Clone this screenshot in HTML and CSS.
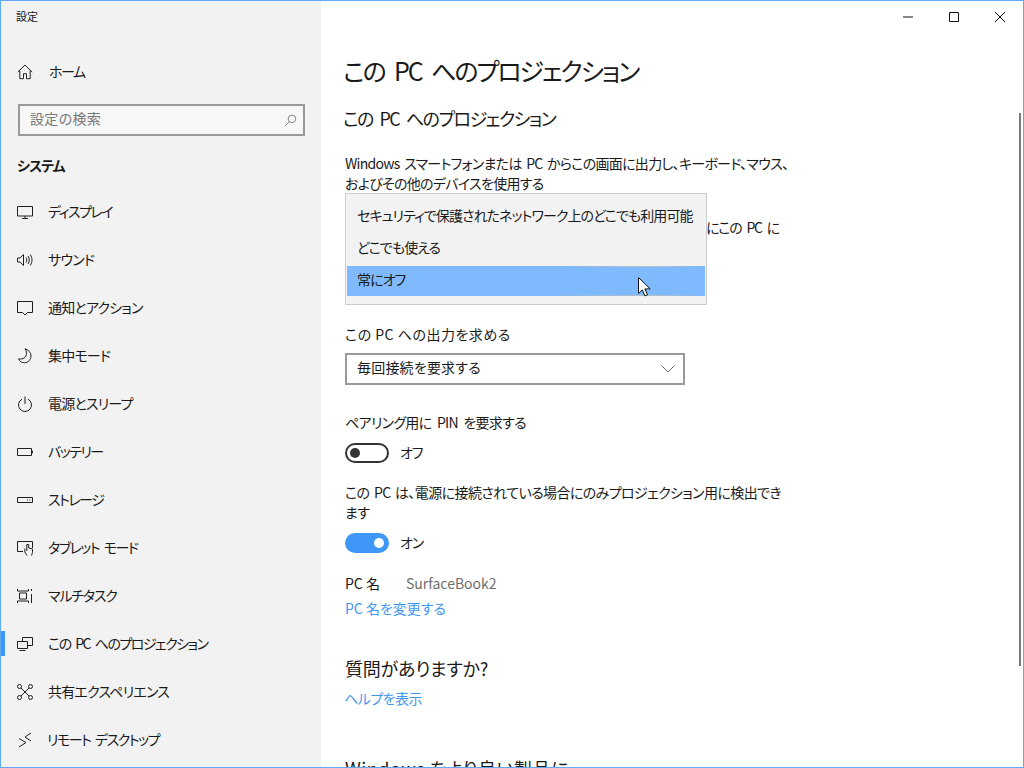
FILE: index.html
```html
<!DOCTYPE html>
<html lang="ja">
<head>
<meta charset="utf-8">
<title>設定</title>
<link rel="stylesheet" href="styles.css">
</head>
<body>
<div class="window">
  <aside class="sidebar">
    <div class="apptitle">設定</div>
    <div class="nav-item home">
      <svg class="icon" viewBox="0 0 16 16"><path d="M.8 8 8 1l7.200 7M2.800 6.500v8.200h3.700v-5h3v5h3.700V6.500"/></svg>
      <span class="tight-c">ホーム</span>
    </div>
    <div class="search">
      <span>設定の検索</span>
      <svg class="search-icon" viewBox="0 0 16 16"><circle cx="9.800" cy="6" r="4.700"/><path d="M6.500 9.500 1 15"/></svg>
    </div>
    <div class="group">システム</div>
    <nav class="nav">
      <div class="nav-item">
        <svg class="icon" viewBox="0 0 16 16"><path d="M.5 2.500h15v9.500H.5zM5 14.500h6M8 12v2.500"/></svg>
        <span class="tight-c">ディスプレイ</span>
      </div>
      <div class="nav-item">
        <svg class="icon" viewBox="0 0 16 16"><path d="M.5 6h2.500L6.500 2.500v11L3 10H.5zM9 5.500c1 1.500 1 3.500 0 5M11 4c1.700 2.500 1.700 5.500 0 8M13.200 2.500c2.400 3.500 2.400 7.500 0 11"/></svg>
        <span class="tight-a">サウンド</span>
      </div>
      <div class="nav-item">
        <svg class="icon" viewBox="0 0 16 16"><path d="M.5 1.500h15v11h-5L8 15l-2.500-2.500h-5z"/></svg>
        <span class="tight-a">通知とアクション</span>
      </div>
      <div class="nav-item">
        <svg class="icon" viewBox="0 0 16 16"><path d="M8 .8c3.800 1.200 6 3.700 6 7.200 0 3.800-3 6.800-6.500 6.800-2.800 0-5-1.500-6-4 4.500 1 8-1.500 8-5.500 0-1.800-.5-3.200-1.500-4.500z"/></svg>
        <span class="tight-a">集中モード</span>
      </div>
      <div class="nav-item">
        <svg class="icon" viewBox="0 0 16 16"><path d="M5 3.200a6.500 6.500 0 1 0 6 0M8 .5v7.500"/></svg>
        <span class="tight-a">電源とスリープ</span>
      </div>
      <div class="nav-item">
        <svg class="icon" viewBox="0 0 16 16"><path d="M.5 4.500h14v7H.5zM14.500 7h1v2h-1"/></svg>
        <span class="tight-c">バッテリー</span>
      </div>
      <div class="nav-item">
        <svg class="icon" viewBox="0 0 16 16"><path d="M.5 5.500h15v5H.5zM10 8h1M12.500 8h1"/></svg>
        <span class="tight-c">ストレージ</span>
      </div>
      <div class="nav-item">
        <svg class="icon" viewBox="0 0 16 16"><path d="M6 11.500H.5v-10h15V8M10 15.500 7.800 12V8.500M9.800 11V4.500h1.900V8l3.800 1v3.500l-1 3"/></svg>
        <span class="tight-c">タブレット モード</span>
      </div>
      <div class="nav-item">
        <svg class="icon" viewBox="0 0 16 16"><path d="M.5 1v2h11V1M2.500 5h7v6h-7zM.5 15v-2h11v2M14.500 1v2M14.500 6v9"/></svg>
        <span class="tight-b">マルチタスク</span>
      </div>
      <div class="nav-item active">
        <svg class="icon" viewBox="0 0 16 16"><path d="M5.500 5V1.500h10v8h-5M.5 5.500h10v7H.5zM2.500 14.500h6"/></svg>
        <span class="tight-c">この PC へのプロジェクション</span>
      </div>
      <div class="nav-item">
        <svg class="icon" viewBox="0 0 16 16"><circle cx="2.500" cy="2.500" r="2"/><circle cx="13.500" cy="2.500" r="2"/><circle cx="2.500" cy="13.500" r="2"/><circle cx="13.500" cy="13.500" r="2"/><path d="m4 4 8 8M12 4 4 12"/></svg>
        <span class="tight-a">共有エクスペリエンス</span>
      </div>
      <div class="nav-item">
        <svg class="icon" viewBox="0 0 16 16"><path d="m2 6.500 7 4-7 4.500M14 1 8 5l6 4"/></svg>
        <span class="tight-c remote">リモート デスクトップ</span>
      </div>
    </nav>
  </aside>

  <main class="main">
    <div class="titlebar">
      <div class="winbtn"><svg viewBox="0 0 10 10"><path d="M0 5h10"/></svg></div>
      <div class="winbtn"><svg viewBox="0 0 10 10"><path d="M.5.500h9v9h-9z"/></svg></div>
      <div class="winbtn"><svg viewBox="0 0 10 10"><path d="m0 0 10 10M10 0 0 10"/></svg></div>
    </div>
    <div class="content">
      <h1>この PC へのプロジェクション</h1>
      <h2>この PC へのプロジェクション</h2>
      <p class="intro">Windows スマートフォンまたは PC からこの画面に出力し、キーボード、マウス、<br>およびその他のデバイスを使用する</p>
      <p class="behind">にこの PC に</p>
      <div class="label first">この PC への出力を求める</div>
      <div class="select">
        <span>毎回接続を要求する</span>
        <svg class="chevron" viewBox="0 0 14 8"><path d="m.5.500 6.500 6.500 6.500-6.500"/></svg>
      </div>
      <div class="label pin">ペアリング用に PIN を要求する</div>
      <div class="toggle-row">
        <span class="toggle"><i></i></span>
        <span class="state">オフ</span>
      </div>
      <div class="label power">この PC は、電源に接続されている場合にのみプロジェクション用に検出できます</div>
      <div class="toggle-row">
        <span class="toggle on"><i></i></span>
        <span class="state">オン</span>
      </div>
      <div class="pcname"><span>PC 名</span><span class="muted">SurfaceBook2</span></div>
      <a class="link">PC 名を変更する</a>
      <h3>質問がありますか?</h3>
      <a class="link help">ヘルプを表示</a>
      <h3 class="better">Windows をより良い製品に</h3>

      <div class="popup">
        <div class="opt">セキュリティで保護されたネットワーク上のどこでも利用可能</div>
        <div class="opt">どこでも使える</div>
        <div class="opt selected">常にオフ</div>
      </div>
      <svg class="cursor" viewBox="0 0 13 20"><path d="M.5.500v16l3.800-3.600 2.600 6 2.600-1.100-2.600-5.900h5.300z"/></svg>
    </div>
    <div class="scrollbar"></div>
  </main>
</div>
</body>
</html>
```

FILE: styles.css
```css
* { box-sizing: border-box; }
html, body { margin: 0; height: 100%; overflow: hidden; background: #fff; }
body {
  font-family: "Noto Sans CJK JP", "Noto Sans", sans-serif;
  font-size: 14px;
  line-height: 20px;
  color: #1a1a1a;
  font-feature-settings: "palt";
}
.window {
  width: 1024px;
  height: 768px;
  display: flex;
  border: 1px solid #5fa8f2;
  overflow: hidden;
}
.sidebar {
  width: 320px;
  flex: none;
  background: #f2f2f2;
  display: flex;
  flex-direction: column;
}
.apptitle { font-size: 11px; line-height: 16px; padding: 7px 0 0 15px; height: 47px; }
.nav-item {
  height: 48px;
  display: flex;
  align-items: center;
  gap: 15px;
  padding-left: 16px;
  flex: none;
  word-spacing: 3px;
}
.nav-item span { margin-bottom: 2px; }
.home { gap: 16px; padding-left: 16px; }
.tight-a { letter-spacing: -0.8px; }
.tight-b { letter-spacing: -1.2px; }
.tight-c { letter-spacing: -1.5px; }
.remote { margin-left: -1px; }
.icon { width: 16px; height: 16px; flex: none; fill: none; stroke: #1f1f1f; stroke-width: 1; }
.nav-item.active { position: relative; }
.nav-item.active::before {
  content: "";
  position: absolute;
  left: 0;
  top: 11px;
  width: 4px;
  height: 25px;
  background: #3f97f8;
}
.search {
  margin: 8px 16px 0 17px;
  width: 287px;
  height: 32px;
  border: 2px solid #999;
  background: #f7f7f7;
  color: #777;
  display: flex;
  align-items: center;
  justify-content: space-between;
  padding: 0 6px 4px 10px;
  letter-spacing: 0.3px;
  flex: none;
}
.search-icon { width: 13px; height: 13px; margin-top: 4px; fill: none; stroke: #777; stroke-width: 1.100; }
.group { font-weight: 700; padding-left: 16px; margin-top: 19px; height: 33px; flex: none; letter-spacing: -1px; }
.nav { display: flex; flex-direction: column; }
.main { flex: 1; position: relative; display: flex; flex-direction: column; min-width: 0; }
.titlebar { height: 31px; display: flex; justify-content: flex-end; flex: none; }
.winbtn { width: 46px; height: 31px; display: flex; align-items: center; justify-content: center; }
.winbtn svg { width: 10px; height: 10px; fill: none; stroke: #111; stroke-width: 1; }
.content { position: relative; flex: 1; overflow: hidden; padding-left: 24px; }
h1 { font-size: 25px; font-weight: 400; line-height: 36px; margin: 20px 0 0 -2px; letter-spacing: -2.1px; word-spacing: 6px; }
h2 { font-size: 18px; font-weight: 400; line-height: 26px; margin: 17px 0 0 -2px; letter-spacing: -1.5px; word-spacing: 4px; }
.intro { width: 450px; margin: 22px 0 0; letter-spacing: -0.7px; word-spacing: 2px; line-height: 20px; }
.behind { width: 434px; margin: 24px 0 0; text-align: right; white-space: nowrap; height: 20px; letter-spacing: -1.2px; word-spacing: 3px; }
.label { width: 446px; }
.first { margin-top: 87px; letter-spacing: 0.5px; }
.select {
  width: 340px;
  height: 32px;
  margin-top: 9px;
  border: 2px solid #999;
  display: flex;
  align-items: center;
  justify-content: space-between;
  padding: 0 8px 4px 10px;
  letter-spacing: 0.2px;
}
.chevron { width: 14px; height: 8px; margin-top: 4px; fill: none; stroke: #666; stroke-width: 1; }
.pin { margin-top: 27px; letter-spacing: -0.7px; word-spacing: 3px; }
.toggle-row { display: flex; align-items: center; gap: 11px; margin-top: 11px; height: 20px; }
.state { letter-spacing: -1px; margin-bottom: 2px; }
.toggle {
  width: 44px;
  height: 20px;
  border: 2px solid #333;
  border-radius: 10px;
  display: flex;
  align-items: center;
  padding: 0 3px;
}
.toggle i { width: 10px; height: 10px; border-radius: 50%; background: #333; }
.toggle.on { background: #3f97f8; border-color: #3f97f8; justify-content: flex-end; }
.toggle.on i { background: #fff; }
.power { margin-top: 19px; width: 444px; letter-spacing: -0.6px; word-spacing: 2px; }
.pcname { margin-top: 20px; display: flex; gap: 26px; height: 20px; }
.muted { color: #6e6e6e; }
.link { display: block; color: #3f97f0; margin-top: 5px; }
.help { letter-spacing: -0.5px; margin-left: -1px; }
h3 { font-size: 18px; font-weight: 400; line-height: 26px; margin: 37px 0 0; letter-spacing: -0.2px; }
h3 + .link { margin-top: 7px; }
.better { margin-top: 47px; letter-spacing: 0.5px; }
.popup {
  position: absolute;
  left: 24px;
  top: 161px;
  width: 362px;
  height: 112px;
  background: #f2f2f2;
  border: 1px solid #ccc;
  padding: 6px 1px;
}
.opt { height: 32px; line-height: 30px; padding-left: 10px; white-space: nowrap; letter-spacing: -0.93px; }
.selected {
  height: 30px;
  line-height: 26px;
  margin-top: 2px;
  background:
    linear-gradient(90deg, #7fbaff 55%, #b8bcc2 85%, #7fbaff) top / 100% 1px no-repeat,
    linear-gradient(90deg, #7fbaff 55%, #b8bcc2 85%, #7fbaff) bottom / 100% 1px no-repeat,
    #7fbaff;
}
.cursor {
  position: absolute;
  left: 317px;
  top: 245px;
  width: 13px;
  height: 20px;
  fill: #fff;
  stroke: #111;
  stroke-width: 1;
}
.scrollbar {
  position: absolute;
  right: 2px;
  top: 112px;
  width: 2px;
  height: 553px;
  background: #7a7a7a;
}
```
